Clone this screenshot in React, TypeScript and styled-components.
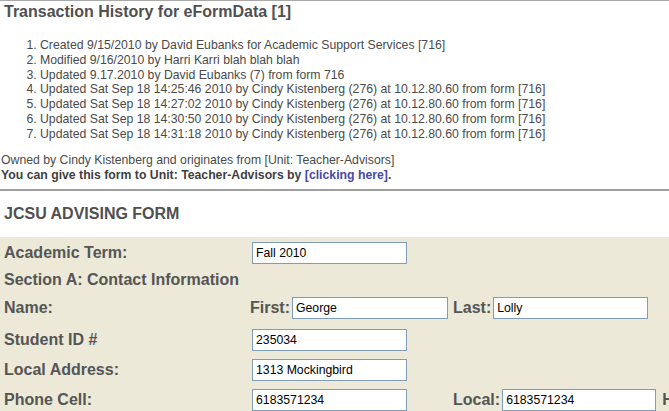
import { createGlobalStyle, styled } from 'styled-components'

const GlobalStyle = createGlobalStyle`
  html, body {
    margin: 0;
    padding: 0;
    background: #ffffff;
  }
  body {
    font-family: "Liberation Sans", Arial, sans-serif;
    color: #4f4f4f;
    overflow: hidden;
  }
`

const Page = styled.div`
  width: 669px;
  height: 411px;
  overflow: hidden;
  border-top: 1px solid #a8a8a8;
  box-sizing: border-box;
`

const Title = styled.h2`
  margin: 0;
  padding: 1px 0 0 4px;
  font-size: 16px;
  line-height: 20px;
  font-weight: bold;
  color: #505050;
`

const HistoryList = styled.ol`
  margin: 16px 0 0 0;
  padding: 0 0 0 40px;
  font-size: 12.25px;
  line-height: 14.8px;
  color: #4a4a4a;
`

const Owner = styled.div`
  margin-top: 11px;
  padding-left: 1px;
  font-size: 12.25px;
  line-height: 15px;
  color: #4a4a4a;
`

const GiveLine = styled.div`
  padding-left: 1px;
  font-size: 12.25px;
  line-height: 15px;
  font-weight: bold;
  color: #3f3f3f;
`

const Link = styled.a`
  color: #4848a8;
  text-decoration: none;
  cursor: pointer;
`

const Rule = styled.hr`
  margin: 6px 0 0 0;
  border: 0;
  border-top: 2px solid #a0a0a0;
  height: 0;
`

const FormTitle = styled.h2`
  margin: 0;
  padding: 13px 0 0 4px;
  height: 33px;
  font-size: 16px;
  line-height: 20px;
  font-weight: bold;
  color: #505050;
`

const FormArea = styled.div`
  background: #ece9d8;
`

const FormRow = styled.div<{ $h: number }>`
  display: flex;
  align-items: center;
  height: ${({ $h }) => $h}px;
`

const Label = styled.div`
  width: 246px;
  padding-left: 4px;
  flex: none;
  font-size: 16px;
  font-weight: bold;
  color: #555555;
`

const Cell = styled.div<{ $pad?: number }>`
  display: flex;
  align-items: center;
  padding-left: ${({ $pad = 2 }) => $pad}px;
`

const InlineLabel = styled.span<{ $ml?: number }>`
  font-size: 16px;
  font-weight: bold;
  color: #555555;
  margin-left: ${({ $ml = 0 }) => $ml}px;
  margin-right: 2px;
  white-space: nowrap;
`

const TextInput = styled.input<{ $w?: number }>`
  box-sizing: border-box;
  width: ${({ $w = 155 }) => $w}px;
  height: 22px;
  margin: 0;
  padding: 1px 3px 0 3px;
  border: 1px solid #7f9db9;
  background: #ffffff;
  font-family: "Liberation Sans", Arial, sans-serif;
  font-size: 12.25px;
  color: #000000;
  outline: none;
`

const history = [
  'Created 9/15/2010 by David Eubanks for Academic Support Services [716]',
  'Modified 9/16/2010 by Harri Karri blah blah blah',
  'Updated 9.17.2010 by David Eubanks (7) from form 716',
  'Updated Sat Sep 18 14:25:46 2010 by Cindy Kistenberg (276) at 10.12.80.60 from form [716]',
  'Updated Sat Sep 18 14:27:02 2010 by Cindy Kistenberg (276) at 10.12.80.60 from form [716]',
  'Updated Sat Sep 18 14:30:50 2010 by Cindy Kistenberg (276) at 10.12.80.60 from form [716]',
  'Updated Sat Sep 18 14:31:18 2010 by Cindy Kistenberg (276) at 10.12.80.60 from form [716]',
]

const App = () => {
  return (
    <Page>
      <GlobalStyle />
      <Title>Transaction History for eFormData [1]</Title>
      <HistoryList>
        {history.map((item, idx) => (
          <li key={idx}>{item}</li>
        ))}
      </HistoryList>
      <Owner>Owned by Cindy Kistenberg and originates from [Unit: Teacher-Advisors]</Owner>
      <GiveLine>
        You can give this form to Unit: Teacher-Advisors by <Link>[clicking here]</Link>.
      </GiveLine>
      <Rule />
      <FormTitle>JCSU ADVISING FORM</FormTitle>
      <FormArea>
        <FormRow $h={32}>
          <Label>Academic Term:</Label>
          <Cell>
            <TextInput defaultValue="Fall 2010" />
          </Cell>
        </FormRow>
        <FormRow $h={22}>
          <Label>Section A: Contact Information</Label>
        </FormRow>
        <FormRow $h={34}>
          <Label>Name:</Label>
          <Cell $pad={0}>
            <InlineLabel>First:</InlineLabel>
            <TextInput $w={156} defaultValue="George" />
            <InlineLabel $ml={5}>Last:</InlineLabel>
            <TextInput $w={155} defaultValue="Lolly" />
          </Cell>
        </FormRow>
        <FormRow $h={30}>
          <Label>Student ID #</Label>
          <Cell>
            <TextInput defaultValue="235034" />
          </Cell>
        </FormRow>
        <FormRow $h={30}>
          <Label>Local Address:</Label>
          <Cell>
            <TextInput defaultValue="1313 Mockingbird" />
          </Cell>
        </FormRow>
        <FormRow $h={30}>
          <Label>Phone Cell:</Label>
          <Cell>
            <TextInput defaultValue="6183571234" />
            <InlineLabel $ml={46}>Local:</InlineLabel>
            <TextInput $w={154} defaultValue="6183571234" />
            <InlineLabel $ml={6}>Home:</InlineLabel>
          </Cell>
        </FormRow>
      </FormArea>
    </Page>
  )
}

export default App
